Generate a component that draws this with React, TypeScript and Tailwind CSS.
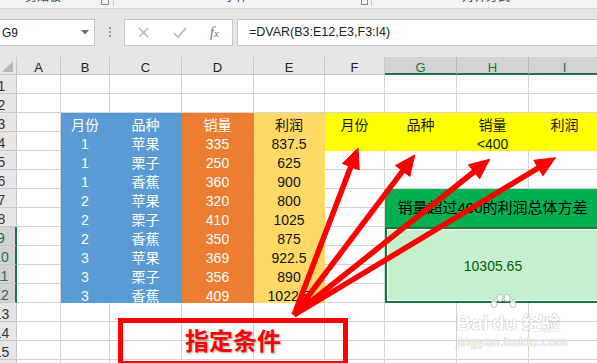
import React from "react"

const letters = ["A", "B", "C", "D", "E", "F", "G", "H", "I"]

const table: Record<number, string[]> = {
  3: ["月份", "品种", "销量", "利润"],
  4: ["1", "苹果", "335", "837.5"],
  5: ["1", "栗子", "250", "625"],
  6: ["1", "香蕉", "360", "900"],
  7: ["2", "苹果", "320", "800"],
  8: ["2", "栗子", "410", "1025"],
  9: ["2", "香蕉", "350", "875"],
  10: ["3", "苹果", "369", "922.5"],
  11: ["3", "栗子", "356", "890"],
  12: ["3", "香蕉", "409", "1022.5"],
}

const criteria = [
  ["月份", "品种", "销量", "利润"],
  ["", "", "<400", ""],
]

const fills = {
  w: "bg-white border-[#d4d4d4]",
  b: "bg-[#5b9bd5] border-[#5b9bd5] text-white",
  o: "bg-[#ed7d31] border-[#ed7d31] text-white",
  e: "bg-[#ffd966] border-[#ffd966] text-[#111]",
  y: "bg-[#ffff00] border-[#ffff00] text-[#1a1a1a]",
}

type Fill = keyof typeof fills

// which cell goes where; null = covered by a merge
function cellAt(r: number, c: number): React.ReactNode | null {
  if (r === 7 && c === 6) {
    return (
      <div
        key={`${r}-${c}`}
        className="col-span-3 row-span-2 bg-[#00b050] border-r border-b border-[#00b050] flex items-center justify-center text-[15px] text-black whitespace-nowrap pt-[1px]"
      >
        销量超过400的利润总体方差
      </div>
    )
  }
  if (r === 9 && c === 6) {
    return (
      <div
        key={`${r}-${c}`}
        className="col-span-3 row-span-4 bg-[#c6efce] border-2 border-[#217346] shadow-[inset_0_0_0_1px_#ffffff] flex items-center justify-center text-[14px] text-[#006100] pt-[2px]"
      >
        10305.65
      </div>
    )
  }
  if ((r === 7 || r === 8) && c >= 6) return null
  if (r >= 9 && r <= 12 && c >= 6) return null

  let text = ""
  let fill: Fill = "w"
  if (r >= 3 && r <= 12 && c >= 1 && c <= 4) {
    text = table[r][c - 1]
    fill = c <= 2 ? "b" : c === 3 ? "o" : "e"
  } else if (r >= 3 && r <= 4 && c >= 5) {
    text = criteria[r - 3][c - 5]
    fill = "y"
  }
  return (
    <div
      key={`${r}-${c}`}
      className={`border-r border-b flex items-end justify-center leading-[11px] text-[14px] whitespace-nowrap ${fills[fill]}`}
    >
      {text}
    </div>
  )
}

function RowHeader({ n }: { n: number }) {
  const sel = n >= 9 && n <= 12
  return sel ? (
    <div className="bg-[#d2d2d2] border-b border-[#c6c6c6] border-r-2 border-r-[#217346] flex items-end justify-center leading-[11px] pb-[1px] text-[14px] text-[#217346]">
      {n}
    </div>
  ) : (
    <div className="bg-[#e6e6e6] border-b border-r border-[#c6c6c6] flex items-end justify-center leading-[11px] pb-[1px] text-[14px] text-[#333]">
      {n}
    </div>
  )
}

function ColHeader({ l }: { l: string }) {
  const sel = l === "G" || l === "H" || l === "I"
  return sel ? (
    <div className="bg-[#d2d2d2] border-r border-[#b5b5b5] border-b-2 border-b-[#217346] flex items-end justify-center leading-[11px] text-[13px] text-[#217346]">
      {l}
    </div>
  ) : (
    <div className="bg-[#e6e6e6] border-r border-b border-[#c6c6c6] flex items-end justify-center leading-[11px] pb-[1px] text-[13px] text-[#222]">
      {l}
    </div>
  )
}

function Arrows() {
  const o = { x: 294, y: 315 }
  const tips = [
    { x: 358, y: 148 },
    { x: 414.7, y: 155 },
    { x: 489.7, y: 159.3 },
    { x: 555.5, y: 157.7 },
  ]
  const L = 20
  const W = 9
  return (
    <svg className="absolute inset-0 pointer-events-none" width="597" height="363" viewBox="0 0 597 363">
      {tips.map((t, i) => {
        const dx = t.x - o.x
        const dy = t.y - o.y
        const len = Math.hypot(dx, dy)
        const ux = dx / len
        const uy = dy / len
        const bx = t.x - ux * L
        const by = t.y - uy * L
        const nx = -uy * W
        const ny = ux * W
        return (
          <g key={i} fill="#ff0000" stroke="#ff0000">
            <line x1={o.x} y1={o.y} x2={bx + ux * 2} y2={by + uy * 2} strokeWidth="5.5" />
            <polygon
              points={`${t.x},${t.y} ${bx + nx},${by + ny} ${bx - nx},${by - ny}`}
              strokeWidth="1"
              strokeLinejoin="miter"
            />
          </g>
        )
      })}
    </svg>
  )
}

function Watermark() {
  return (
    <div className="absolute left-[456px] top-[299px] pointer-events-none text-white opacity-90 [text-shadow:0_0_1px_#a8a8a8,0_0_1px_#a8a8a8]">
      <div className="relative flex items-end h-[34px] font-bold text-[21px] leading-none">
        <span>Bai</span>
        <span className="relative ml-[3px]">
          du
          <svg className="absolute left-[-4px] top-[-19px]" width="30" height="20" viewBox="0 0 30 20">
            <g fill="#ffffff" stroke="#b0b0b0" strokeWidth="0.8">
              <ellipse cx="6" cy="11" rx="3" ry="3.6" />
              <ellipse cx="12" cy="5" rx="3" ry="3.6" />
              <ellipse cx="19" cy="5" rx="3" ry="3.6" />
              <ellipse cx="25" cy="11" rx="3" ry="3.6" />
            </g>
          </svg>
        </span>
        <span className="ml-[5px] text-[19px]">经验</span>
      </div>
      <div className="text-[13px] leading-none mt-[2px] tracking-[0.4px]">jingyan.baidu.com</div>
    </div>
  )
}

export default function App() {
  const rows = Array.from({ length: 16 }, (_, i) => i + 1)
  return (
    <div className="relative w-[597px] h-[363px] overflow-hidden bg-white font-[Liberation_Sans,Noto_Sans_CJK_SC,sans-serif]">
      {/* ribbon bottom edge */}
      <div className="relative h-[9px] bg-[#f3f3f3] border-b border-[#d5d5d5] overflow-hidden text-[12px] text-[#444] leading-[12px]">
        <div className="flex items-start -mt-[9px]">
          <span className="ml-[25px]">剪贴板</span>
          <span className="ml-[40px] mt-[6px] w-[8px] h-[8px] border border-[#888]" />
          <span className="ml-[4px] mt-[3px] w-px h-[12px] bg-[#c8c8c8]" />
          <span className="ml-[110px]">字体</span>
          <span className="ml-[113px] mt-[6px] w-[7px] h-[8px] border border-[#888]" />
          <span className="ml-[3px] mt-[3px] w-px h-[12px] bg-[#c8c8c8]" />
          <span className="ml-[90px]">对齐方式</span>
        </div>
      </div>

      {/* name box + formula bar */}
      <div className="h-[48px] bg-[#e6e6e6] flex items-start pt-[10px]">
        <div className="-ml-[2px] w-[97px] h-[27px] bg-white border border-[#c6c6c6] flex items-center pl-[3px] text-[12px] text-[#222]">
          G9
          <svg className="ml-auto mr-[5px]" width="8" height="5" viewBox="0 0 8 5">
            <path d="M0 0 H8 L4 4.5 Z" fill="#6b6b6b" />
          </svg>
        </div>
        <div className="ml-[14px] mt-[8px] flex flex-col gap-[2px]">
          <span className="w-[2px] h-[2px] bg-[#9a9a9a]" />
          <span className="w-[2px] h-[2px] bg-[#9a9a9a]" />
          <span className="w-[2px] h-[2px] bg-[#9a9a9a]" />
        </div>
        <div className="ml-[13px] w-[109px] h-[27px] bg-white border border-[#c6c6c6] flex items-center">
          <svg className="ml-[13px]" width="11" height="11" viewBox="0 0 11 11">
            <path d="M1 1 L10 10 M10 1 L1 10" stroke="#b4b4b4" strokeWidth="1.4" />
          </svg>
          <svg className="ml-[24px]" width="14" height="11" viewBox="0 0 14 11">
            <path d="M1 6 L5 10 L13 1" stroke="#b4b4b4" strokeWidth="1.6" fill="none" />
          </svg>
          <span className="ml-[23px] font-[Liberation_Serif,serif] italic text-[14px] text-[#6e6e6e] leading-none">
            f<span className="text-[11px]">x</span>
          </span>
        </div>
        <div className="ml-[4px] flex-1 h-[27px] bg-white border border-r-0 border-[#c6c6c6] flex items-center pl-[11px] text-[12.5px] text-[#222]">
          =DVAR(B3:E12,E3,F3:I4)
        </div>
      </div>

      {/* sheet */}
      <div className="-ml-[13px] w-max grid grid-cols-[30px_44px_49px_72px_72px_71px_60px_72px_72px_72px] grid-rows-[18px_repeat(16,19px)]">
        <div className="bg-[#e6e6e6] border-r border-b border-[#c6c6c6] flex items-end justify-end pr-[3px] pb-[2px]">
          <svg width="11" height="11" viewBox="0 0 11 11">
            <path d="M11 0 V11 H0 Z" fill="#b7b7b7" />
          </svg>
        </div>
        {letters.map((l) => (
          <ColHeader key={l} l={l} />
        ))}
        {rows.map((r) => (
          <React.Fragment key={r}>
            <RowHeader n={r} />
            {letters.map((_, c) => cellAt(r, c))}
          </React.Fragment>
        ))}
      </div>

      <Arrows />

      {/* callout box */}
      <div className="absolute left-[118px] top-[318px] w-[230px] h-[48px] border-[5px] border-[#ff0000] flex items-center justify-center">
        <span className="text-[24px] font-bold text-[#ff0000] leading-none tracking-[0px] [text-shadow:1px_1px_2px_rgba(0,0,0,0.35)]">
          指定条件
        </span>
      </div>

      <Watermark />
    </div>
  )
}
